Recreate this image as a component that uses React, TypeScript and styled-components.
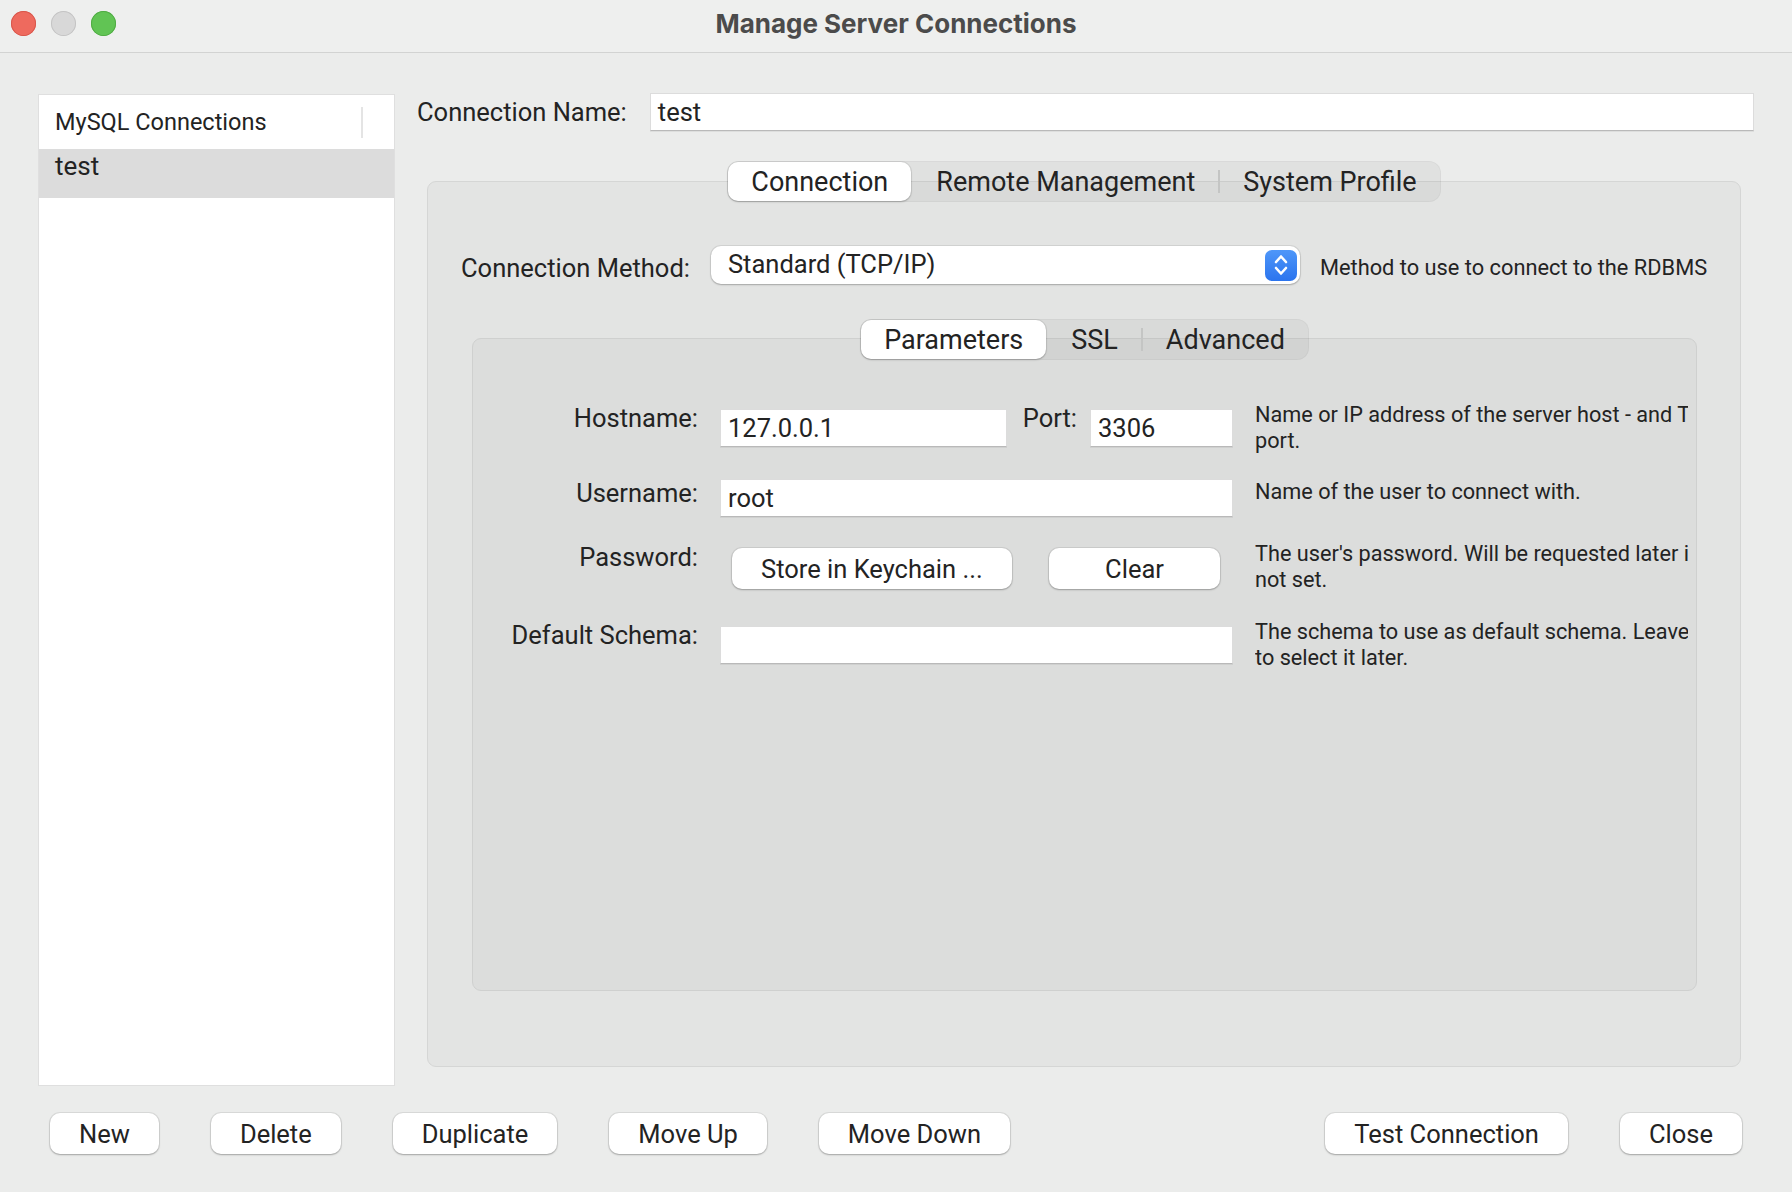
import React from "react";
import styled, { createGlobalStyle } from "styled-components";

const colors = {
  window: "#ebeceb",
  titleBar: "#eeefee",
  titleRule: "#d2d3d2",
  text: "#232323",
  title: "#4b4b4b",
  outerGroup: "#e3e4e3",
  outerBorder: "#d5d6d5",
  innerGroup: "#dcdddc",
  innerBorder: "#cfd0cf",
  listBorder: "#dfdfdf",
  selectedRow: "#dcdcdc",
  segBar: "rgba(0, 0, 0, 0.045)",
  segDivider: "#c4c5c4",
  blueTop: "#4f97f9",
  blueBottom: "#2b74ee",
};

const bodySize = "25.5px";

const GlobalStyle = createGlobalStyle`
  * { box-sizing: border-box; }
  html, body { margin: 0; padding: 0; background: ${colors.window}; }
  body {
    font-family: Roboto, "Liberation Sans", sans-serif;
    color: ${colors.text};
    -webkit-font-smoothing: antialiased;
  }
`;

// ── Window chrome ─────────────────────────────────────────────────────────────

const Window = styled.div`
  width: 1792px;
  height: 1192px;
  display: flex;
  flex-direction: column;
  background: ${colors.window};
  overflow: hidden;
`;

const TitleBar = styled.header`
  flex: none;
  height: 53px;
  display: grid;
  grid-template-columns: 1fr auto 1fr;
  align-items: center;
  padding-bottom: 5px;
  background: ${colors.titleBar};
  border-bottom: 1px solid ${colors.titleRule};
`;

const Lights = styled.div`
  display: flex;
  gap: 15px;
  padding-left: 11px;
`;

const Light = styled.span<{ $fill: string; $ring: string }>`
  width: 25px;
  height: 25px;
  border-radius: 50%;
  background: ${p => p.$fill};
  box-shadow: inset 0 0 0 1px ${p => p.$ring};
`;

const Title = styled.h1`
  margin: 0;
  font-family: Inter, Roboto, sans-serif;
  font-size: 26px;
  font-weight: 700;
  color: ${colors.title};
`;

// ── Layout ────────────────────────────────────────────────────────────────────

const Body = styled.div`
  flex: 1;
  min-height: 0;
  display: flex;
  flex-direction: column;
  gap: 27px;
  padding: 41px 38px 38px;
`;

const MainRow = styled.div`
  flex: 1;
  min-height: 0;
  display: flex;
  gap: 22px;
`;

const BottomBar = styled.div`
  flex: none;
  display: flex;
  gap: 52px;
  padding: 0 12px;
`;

const Spacer = styled.div`
  flex: 1;
`;

// ── Connection list ───────────────────────────────────────────────────────────

const ConnList = styled.div`
  width: 357px;
  background: #fff;
  border: 1px solid ${colors.listBorder};
  display: flex;
  flex-direction: column;
`;

const ListHeader = styled.div`
  height: 54px;
  display: flex;
  align-items: center;
  padding-left: 16px;
`;

const HeaderText = styled.span`
  flex: 1;
  font-size: 23.5px;
`;

const HeaderDivider = styled.span`
  width: 2px;
  height: 31px;
  margin-right: 31px;
  background: #e4e4e4;
`;

const ListRow = styled.div<{ $selected?: boolean }>`
  height: 49px;
  padding: 2px 16px 0;
  font-size: 26px;
  line-height: 30px;
  background: ${p => (p.$selected ? colors.selectedRow : "transparent")};
`;

// ── Right side ────────────────────────────────────────────────────────────────

const RightCol = styled.div`
  flex: 1;
  min-width: 0;
  display: flex;
  flex-direction: column;
`;

const NameRow = styled.div`
  height: 38px;
  margin-top: -1px;
  display: flex;
  align-items: center;
  gap: 23px;
`;

const Label = styled.span<{ $drop?: number }>`
  margin-top: ${p => (p.$drop ?? 0) * 2}px;
  font-size: ${bodySize};
  white-space: nowrap;
`;

const Field = styled.div<{ $width?: number; $raise?: number }>`
  ${p => (p.$width ? `width: ${p.$width}px; flex: none;` : "flex: 1;")}
  height: 38px;
  margin-top: ${p => -(p.$raise ?? 0)}px;
  display: flex;
  align-items: center;
  padding: 0 7px;
  font-size: ${bodySize};
  background: #fff;
  border: 1px solid #dcdcdc;
  border-bottom-color: #b9b9b9;
  box-shadow: 0 1px 0 rgba(0, 0, 0, 0.06);
`;

const TabFrame = styled.div<{ $margin: string }>`
  flex: 1;
  display: flex;
  flex-direction: column;
  align-items: center;
  margin: ${p => p.$margin};
`;

const SegBar = styled.div<{ $overlap: number }>`
  position: relative;
  z-index: 1;
  height: 41px;
  margin-bottom: -${p => p.$overlap}px;
  display: flex;
  align-items: center;
  padding: 1px;
  border-radius: 12px;
  background: ${colors.segBar};
  box-shadow: inset 0 0 0 1px rgba(0, 0, 0, 0.03);
`;

const SegTab = styled.div<{ $active?: boolean }>`
  height: 39px;
  display: flex;
  align-items: center;
  padding: 0 23px;
  font-size: 27px;
  white-space: nowrap;
  border-radius: 10px;
  background: ${p => (p.$active ? "#fff" : "transparent")};
  box-shadow: ${p => (p.$active ? "0 0 0 1px rgba(0,0,0,0.06), 0 1px 2px rgba(0,0,0,0.22)" : "none")};
`;

const SegDivider = styled.span<{ $hidden?: boolean }>`
  width: 2px;
  height: 23px;
  background: ${p => (p.$hidden ? "transparent" : colors.segDivider)};
`;

const GroupBox = styled.div<{ $tone: "outer" | "inner" }>`
  align-self: stretch;
  flex: 1;
  display: flex;
  flex-direction: column;
  border-radius: 9px;
  background: ${p => (p.$tone === "outer" ? colors.outerGroup : colors.innerGroup)};
  border: 1px solid ${p => (p.$tone === "outer" ? colors.outerBorder : colors.innerBorder)};
  padding: ${p => (p.$tone === "outer" ? "64px 0 75px" : "70px 8px 0 0")};
`;

const MethodRow = styled.div`
  height: 38px;
  display: flex;
  align-items: center;
  gap: 20px;
  padding-left: 33px;
`;

const Select = styled.div`
  width: 589px;
  height: 38px;
  display: flex;
  align-items: center;
  padding: 0 3px 0 17px;
  border-radius: 10px;
  background: #fff;
  box-shadow: 0 0 0 1px rgba(0, 0, 0, 0.07), 0 1px 2px rgba(0, 0, 0, 0.22);
  margin-left: 1px;
`;

const SelectText = styled.span`
  flex: 1;
  margin-top: -2px;
  font-size: ${bodySize};
`;

const Stepper = styled.span`
  width: 32px;
  height: 31px;
  display: flex;
  align-items: center;
  justify-content: center;
  border-radius: 7px;
  background: linear-gradient(180deg, ${colors.blueTop}, ${colors.blueBottom});
`;

const Hint = styled.span`
  margin-top: 5px;
  font-size: 21.8px;
  white-space: nowrap;
`;

const FormGrid = styled.div`
  display: grid;
  grid-template-columns: 225px 513px 1fr;
  grid-template-rows: 75px 64px 78px auto;
  column-gap: 22px;
  align-items: start;
`;

const FormLabel = styled.span`
  justify-self: end;
  margin-top: -6px;
  font-size: ${bodySize};
  line-height: 30px;
  white-space: nowrap;
`;

const FieldCell = styled.div<{ $split?: boolean }>`
  display: flex;
  align-items: flex-start;
  justify-content: ${p => (p.$split ? "space-between" : "flex-start")};
  padding: ${p => (p.$split ? "0 13px 0 12px" : "0")};
`;

const PortLabel = styled.span`
  margin: -6px 13px 0 16px;
  font-size: ${bodySize};
  line-height: 30px;
`;

const DescCell = styled.div<{ $drop?: number }>`
  min-width: 0;
  overflow: hidden;
  margin-top: ${p => -7 + (p.$drop ?? 0)}px;
  font-size: 21.7px;
  line-height: 26px;
`;

const DescLine = styled.div`
  white-space: nowrap;
`;

const Button = styled.button<{ $width?: number }>`
  height: 41px;
  ${p => (p.$width ? `width: ${p.$width}px;` : "")}
  padding: 0 29px;
  border: none;
  border-radius: 10px;
  background: #fff;
  color: ${colors.text};
  font-family: inherit;
  font-size: ${bodySize};
  white-space: nowrap;
  box-shadow: 0 0 0 1px rgba(0, 0, 0, 0.07), 0 1px 2px rgba(0, 0, 0, 0.25);
`;

// ── Sub-components ────────────────────────────────────────────────────────────

function Segmented({ tabs, active, overlap }: { tabs: string[]; active: number; overlap: number }) {
  return (
    <SegBar $overlap={overlap}>
      {tabs.map((t, i) => (
        <React.Fragment key={t}>
          {i > 0 && <SegDivider $hidden={i === active || i - 1 === active} />}
          <SegTab $active={i === active}>{t}</SegTab>
        </React.Fragment>
      ))}
    </SegBar>
  );
}

function Chevrons() {
  return (
    <svg width="18" height="28" viewBox="0 0 18 28" fill="none" stroke="#fff" strokeWidth="2.6" strokeLinecap="round" strokeLinejoin="round">
      <path d="M4 11 L9 5.5 L14 11" />
      <path d="M4 17 L9 22.5 L14 17" />
    </svg>
  );
}

const descriptions = {
  host: ["Name or IP address of the server host - and TCP/IP", "port."],
  user: ["Name of the user to connect with."],
  password: ["The user's password. Will be requested later if it's", "not set."],
  schema: ["The schema to use as default schema. Leave blank", "to select it later."],
};

function Desc({ lines, drop }: { lines: string[]; drop?: number }) {
  return (
    <DescCell $drop={drop}>
      {lines.map(l => (
        <DescLine key={l}>{l}</DescLine>
      ))}
    </DescCell>
  );
}

// ── Main component ────────────────────────────────────────────────────────────

export default function App() {
  return (
    <>
      <GlobalStyle />
      <Window>
        <TitleBar>
          <Lights>
            <Light $fill="#ee6a5e" $ring="#d8574c" />
            <Light $fill="#d8d8d8" $ring="#c4c4c4" />
            <Light $fill="#61c454" $ring="#50ab44" />
          </Lights>
          <Title>Manage Server Connections</Title>
          <span />
        </TitleBar>

        <Body>
          <MainRow>
            <ConnList>
              <ListHeader>
                <HeaderText>MySQL Connections</HeaderText>
                <HeaderDivider />
              </ListHeader>
              <ListRow $selected>test</ListRow>
            </ConnList>

            <RightCol>
              <NameRow>
                <Label>Connection Name:</Label>
                <Field>test</Field>
              </NameRow>

              <TabFrame $margin="30px 13px 19px 10px">
                <Segmented tabs={["Connection", "Remote Management", "System Profile"]} active={0} overlap={21} />
                <GroupBox $tone="outer">
                  <MethodRow>
                    <Label $drop={3}>Connection Method:</Label>
                    <Select>
                      <SelectText>Standard (TCP/IP)</SelectText>
                      <Stepper>
                        <Chevrons />
                      </Stepper>
                    </Select>
                    <Hint>Method to use to connect to the RDBMS</Hint>
                  </MethodRow>

                  <TabFrame $margin="35px 43px 0 44px">
                    <Segmented tabs={["Parameters", "SSL", "Advanced"]} active={0} overlap={22} />
                    <GroupBox $tone="inner">
                      <FormGrid>
                        <FormLabel>Hostname:</FormLabel>
                        <FieldCell>
                          <Field>127.0.0.1</Field>
                          <PortLabel>Port:</PortLabel>
                          <Field $width={143}>3306</Field>
                        </FieldCell>
                        <Desc lines={descriptions.host} />

                        <FormLabel>Username:</FormLabel>
                        <FieldCell>
                          <Field $raise={5}>root</Field>
                        </FieldCell>
                        <Desc lines={descriptions.user} drop={2} />

                        <FormLabel>Password:</FormLabel>
                        <FieldCell $split>
                          <Button>Store in Keychain ...</Button>
                          <Button $width={171}>Clear</Button>
                        </FieldCell>
                        <Desc lines={descriptions.password} />

                        <FormLabel>Default Schema:</FormLabel>
                        <FieldCell>
                          <Field />
                        </FieldCell>
                        <Desc lines={descriptions.schema} />
                      </FormGrid>
                    </GroupBox>
                  </TabFrame>
                </GroupBox>
              </TabFrame>
            </RightCol>
          </MainRow>

          <BottomBar>
            <Button>New</Button>
            <Button>Delete</Button>
            <Button>Duplicate</Button>
            <Button>Move Up</Button>
            <Button>Move Down</Button>
            <Spacer />
            <Button>Test Connection</Button>
            <Button>Close</Button>
          </BottomBar>
        </Body>
      </Window>
    </>
  );
}
